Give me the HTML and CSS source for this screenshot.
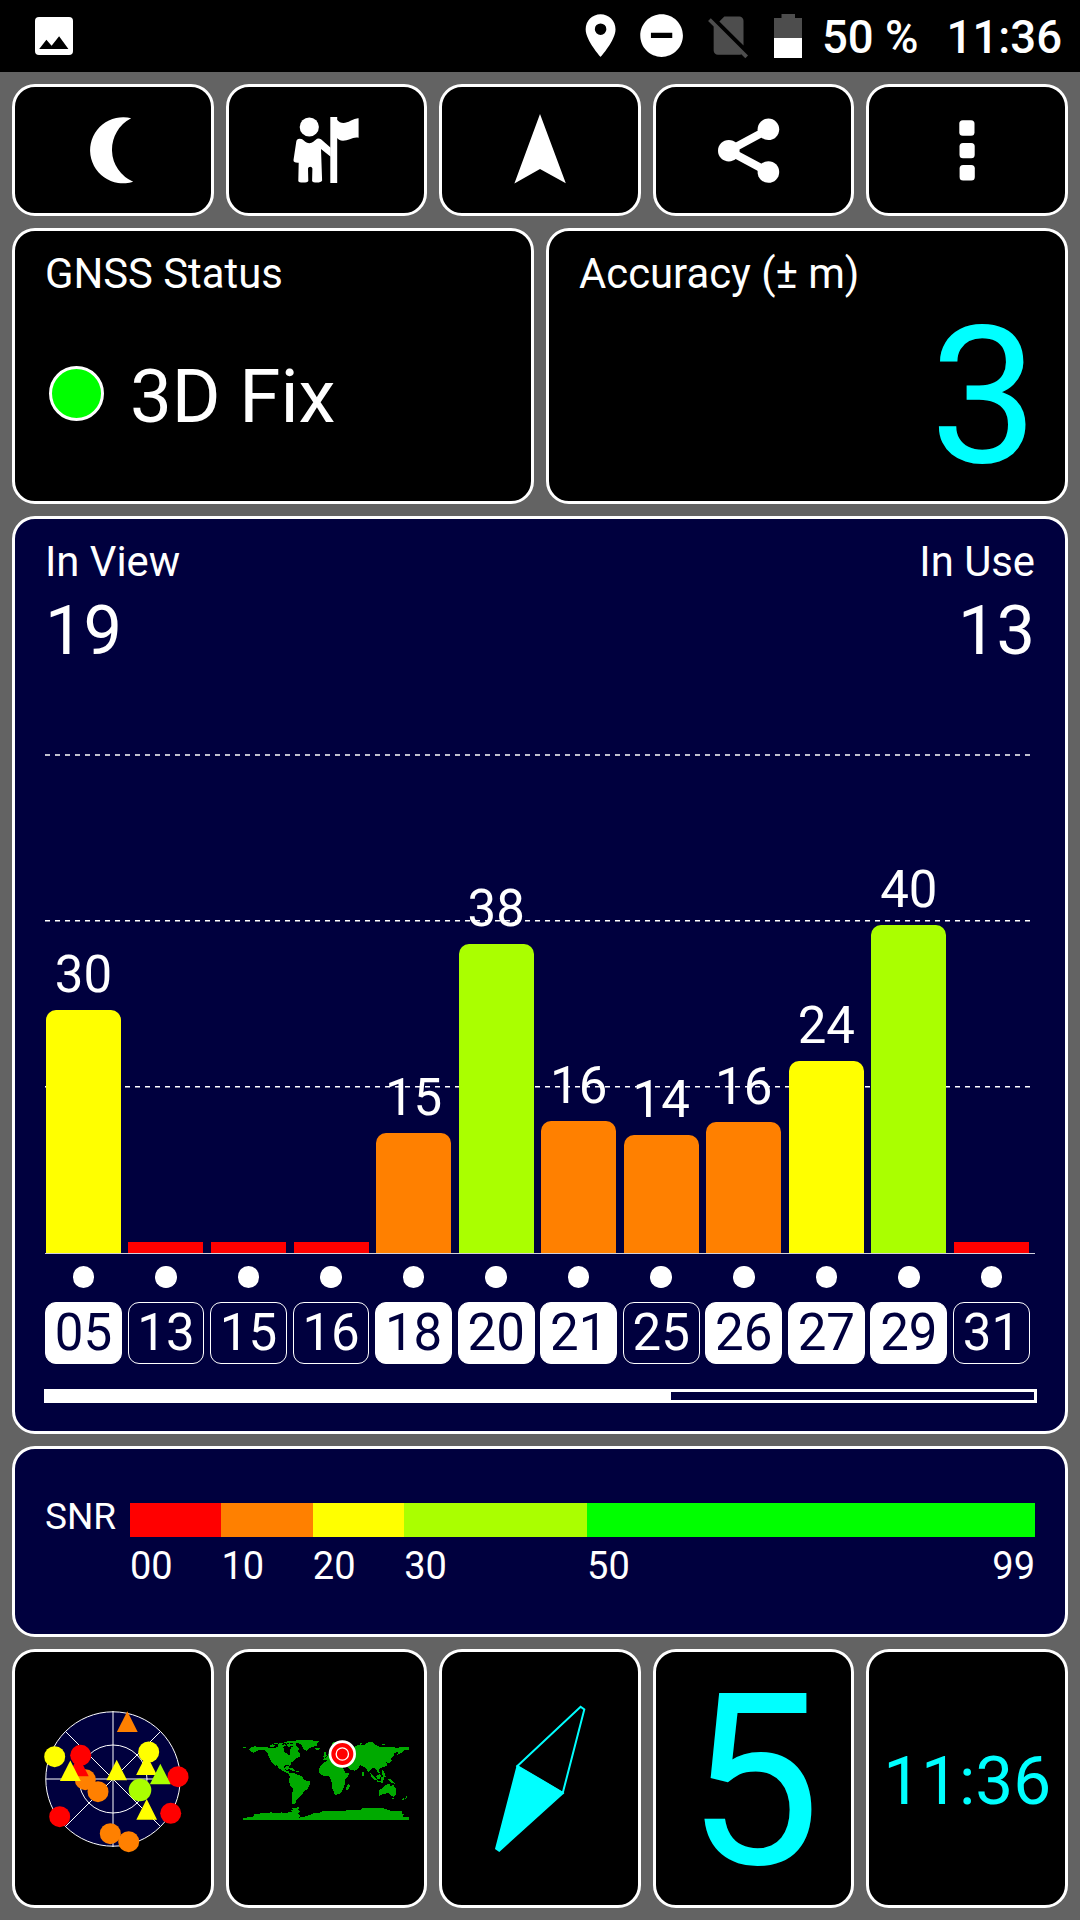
FILE: index.html
```html
<!DOCTYPE html>
<html lang="en">
<head>
    <meta charset="UTF-8">
    <meta name="viewport" content="width=device-width, initial-scale=1.0">
    <title>GNSS Status</title>
    <link rel="stylesheet" href="styles.css">
</head>
<body>
    <div class="status-bar">
        <svg class="status-image" viewBox="0 0 38 38">
            <rect width="38" height="38" rx="4" fill="#fff"/>
            <path d="M4.2 32L11.4 22.7 16.6 28.7 24.1 19.3 33.4 32z" fill="#000"/>
        </svg>
        <svg class="status-icon location" viewBox="0 0 24 24">
            <path fill="#fff" fill-rule="evenodd" d="M12 2C8.13 2 5 5.13 5 9c0 5.25 7 13 7 13s7-7.75 7-13c0-3.87-3.13-7-7-7zm0 9.7a2.7 2.7 0 1 1 0-5.4 2.7 2.7 0 0 1 0 5.4z"/>
        </svg>
        <svg class="status-icon dnd" viewBox="0 0 24 24">
            <path fill="#fff" d="M12 2C6.48 2 2 6.48 2 12s4.48 10 10 10 10-4.48 10-10S17.52 2 12 2zm5 11.1H7v-2.4h10v2.4z"/>
        </svg>
        <svg class="status-icon no-sim" viewBox="0 0 24 24">
            <path fill="#4d4d4d" d="M18.99 5c0-1.1-.89-2-1.99-2h-7L7.66 5.34 19 16.68 18.99 5zM3.65 3.88L2.38 5.15 5 7.77V19c0 1.1.9 2 2.01 2H17c.35 0 .67-.1.96-.26l1.88 1.88 1.27-1.27L3.65 3.88z"/>
        </svg>
        <svg class="battery" viewBox="0 0 28 44">
            <path fill="#4d4d4d" d="M7.5 0h13.5v4H28v20H0V4h7.5z"/>
            <rect y="24" width="28" height="20" fill="#fff"/>
        </svg>
        <span class="status-text percent">50 %</span>
        <span class="status-text">11:36</span>
    </div>

    <div class="screen">
        <div class="row five">
            <div class="tile">
                <svg class="tool-icon" viewBox="-42 -42 84 84">
                    <path d="M18.2-31.7A33 33 0 1 0 20.2 31.7A35 35 0 0 1 18.2-31.7z"/>
                </svg>
            </div>
            <div class="tile">
                <svg class="tool-icon" viewBox="-42.5 -42 84 84">
                    <circle cx="-17.2" cy="-23" r="9.6"/>
                    <path d="M3.8-33h6.9V33H3.8z"/>
                    <path d="M10.2-30.5C14-25.8 19-26.5 24-29.2Q29-32 32.1-31.7V-12.3C27-13.8 22-9.3 16.5-9.2Q12-9.5 10.2-12.5z"/>
                    <path d="M-30.2-8.5Q-29.5-12.3-25-11C-22-9.5-20.5-6.8-17.2-6.8S-12.3-9-9.5-11.2Q-7.5-12-5.5-10.7L4.2-2.3V6.7L-5.5-1-4.4 30.5Q-5.5 32.5-9.6 32.5T-14.4 31L-14.1 18.5Q-14.4 16.7-16.3 16.7T-18.5 18.5L-18.2 31Q-19 32.5-23.4 32.5T-28.2 31L-27.8 12.7Q-33.3 13-33 10z"/>
                </svg>
            </div>
            <div class="tile">
                <svg class="tool-icon" viewBox="-42 -42 84 84">
                    <path d="M0-36L25.8 33.2 0 19-25.6 33.5z"/>
                </svg>
            </div>
            <div class="tile">
                <svg class="tool-icon" viewBox="-42 -42 84 84">
                    <path d="M14.4-20.7L-25.2.7 14.4 22" fill="none" stroke="#fff" stroke-width="8"/>
                    <circle cx="14.4" cy="-20.7" r="10.8"/>
                    <circle cx="-25.2" cy=".7" r="10.8"/>
                    <circle cx="14.4" cy="22" r="10.8"/>
                </svg>
            </div>
            <div class="tile">
                <svg class="tool-icon" viewBox="-42 -42 84 84">
                    <rect x="-7.7" y="-29.7" width="15.2" height="15.4" rx="3.5"/>
                    <rect x="-7.5" y="-7" width="15.2" height="15.2" rx="3.5"/>
                    <rect x="-7.4" y="15" width="15.2" height="15.4" rx="3.5"/>
                </svg>
            </div>
        </div>

        <div class="row two">
            <div class="tile panel">
                <div class="heading">GNSS Status</div>
                <div class="fix">
                    <span class="fix-light"></span>
                    <span class="fix-text">3D Fix</span>
                </div>
            </div>
            <div class="tile panel">
                <div class="heading">Accuracy (± m)</div>
                <div class="accuracy">3</div>
            </div>
        </div>

        <div class="tile panel blue">
            <div class="counts">
                <div>
                    <div class="heading">In View</div>
                    <div class="count">19</div>
                </div>
                <div class="right">
                    <div class="heading">In Use</div>
                    <div class="count">13</div>
                </div>
            </div>

            <div class="plot">
                <svg class="grid-lines" viewBox="0 0 990 583">
                    <path d="M0 85H990M0 250.8H990M0 416.8H990"/>
                </svg>
                <div class="bars">
                    <div class="bar-col"><span>30</span><div class="bar yellow" style="height: 243px"></div></div>
                    <div class="bar-col"><div class="bar red" style="height: 11px"></div></div>
                    <div class="bar-col"><div class="bar red" style="height: 11px"></div></div>
                    <div class="bar-col"><div class="bar red" style="height: 11px"></div></div>
                    <div class="bar-col"><span>15</span><div class="bar orange" style="height: 120px"></div></div>
                    <div class="bar-col"><span>38</span><div class="bar lime" style="height: 309px"></div></div>
                    <div class="bar-col"><span>16</span><div class="bar orange" style="height: 132px"></div></div>
                    <div class="bar-col"><span>14</span><div class="bar orange" style="height: 118px"></div></div>
                    <div class="bar-col"><span>16</span><div class="bar orange" style="height: 131px"></div></div>
                    <div class="bar-col"><span>24</span><div class="bar yellow" style="height: 192px"></div></div>
                    <div class="bar-col"><span>40</span><div class="bar lime" style="height: 328px"></div></div>
                    <div class="bar-col"><div class="bar red" style="height: 11px"></div></div>
                </div>
            </div>

            <div class="satellites">
                <div class="sat used">05</div>
                <div class="sat">13</div>
                <div class="sat">15</div>
                <div class="sat">16</div>
                <div class="sat used">18</div>
                <div class="sat used">20</div>
                <div class="sat used">21</div>
                <div class="sat">25</div>
                <div class="sat used">26</div>
                <div class="sat used">27</div>
                <div class="sat used">29</div>
                <div class="sat">31</div>
            </div>

            <div class="scroll"><div class="scroll-fill"></div></div>
        </div>

        <div class="tile panel blue snr">
            <div class="snr-label">SNR</div>
            <div class="snr-scale">
                <div class="part ten"><div class="swatch red"></div><span>00</span></div>
                <div class="part ten"><div class="swatch orange"></div><span>10</span></div>
                <div class="part ten"><div class="swatch yellow"></div><span>20</span></div>
                <div class="part twenty"><div class="swatch lime"></div><span>30</span></div>
                <div class="part rest"><div class="swatch green"></div><div class="ends"><span>50</span><span>99</span></div></div>
            </div>
        </div>

        <div class="row five">
            <div class="tile">
                <svg class="radar" viewBox="-80 -80 160 160">
                    <g fill="none" stroke="#fff">
                        <circle r="67.2" fill="#00003e"/>
                        <circle r="34"/>
                        <path d="M0-68V68M-67 0H67M-47.5-47.5L47.5 47.5M-47.5 47.5L47.5-47.5"/>
                    </g>
                    <g fill="#ff8000">
                        <circle cx="-27.7" cy=".7" r="10.5"/>
                        <circle cx="-15" cy="12.7" r="10.5"/>
                        <circle cx="-2.7" cy="54.7" r="10.5"/>
                        <circle cx="15.7" cy="62.7" r="10.5"/>
                        <path d="M14.3-67.7l10.4 20.6H3.9z"/>
                    </g>
                    <g fill="#f00">
                        <path d="M-34.7-23.3l10.4 20.6h-20.8z"/>
                        <circle cx="-32.3" cy="-23.7" r="10.5"/>
                        <circle cx="65" cy="-2.3" r="10.5"/>
                        <circle cx="-53.3" cy="37.7" r="10.5"/>
                        <circle cx="57.7" cy="34.3" r="10.5"/>
                    </g>
                    <g fill="#ff0">
                        <path d="M33.5-24.6l10.4 20.6H23.1z"/>
                        <path d="M3.7-19.3l10.4 20.6H-6.7z"/>
                        <path d="M-42.7-18.6l10.4 20.6h-20.8z"/>
                        <path d="M33.7 20.1l10.4 20.6H23.3z"/>
                        <circle cx="-58.3" cy="-22.3" r="10.5"/>
                        <circle cx="35.7" cy="-27" r="10.5"/>
                    </g>
                    <g fill="#aaff00">
                        <path d="M47.3-15.3l10.4 20.6H36.9z"/>
                        <circle cx="27" cy="11" r="11.3"/>
                    </g>
                </svg>
            </div>
            <div class="tile">
                <svg class="world" viewBox="70 293 498 246">
                    <g fill="#00aa00" shape-rendering="crispEdges">
                        <path d="M70 321h8v3h-8zM92 322l13-4 20 2 25 2 38-1 6 6-3 8 9 3 8 8 5-4-3-9 4-11 8-3 8 2 4 11 8 9-2 9-10 4-7 7-10 6 2 8-6 1-6-3-8 3-3 8 6 6 8 2 4 9-7-2-11-6-12-7-9-11-4 1-12-11-9-18-2-9-9-8-20 0-13 7-7-2-7-7z"/>
                        <path d="M150 316l9-4 8 3-7 5-10-1zM163 309l8-2 4 3-9 2zM174 313l7-7 8 3-4 5 12-2 3 5-11 3-13-1zM192 306l14-4 14 0-7 5-12 3zM202 312l9-3 5 8-11 3zM216 310l13-2-1 6 10 10-2 8-10-4-5-9-8-3z"/>
                        <path d="M211 302l25-2 34-1 29 4-7 5 0 7-16 6-8 3-6 8-9-3-7-14-9-7-22-1zM287 324l11-1 3 3-8 3-5-2z"/>
                        <path d="M193 386l8-10h8l-2 6 10 1 5 5-11 0-3-3-6 4zM218 390h9v3h-9zM229 392h8v3h-8z"/>
                        <path d="M207 399l18 0 11 5 11 4 7 11 19 5-3 10-6 13-11 5-6 12-10 9-7 8-3 10h-10l-1-20 4-25-9-12-4-13 4-11z"/>
                        <path d="M303 375l12-11 20-2 14 9 16 1 12 25 14 3-14 17-2 17-6 16-11 12-12 1-8-17-2-21-7-17-17-1-12-8-3-12zM387 430l4 5-6 15-6-1 2-12z"/>
                        <path d="M307 350l7-4-3-8 6-5 5 14-7 5zM308 357l14-8 8-14 9-29 21-3 25 12 20 4 10-6 17 2 10-8 16 0 18 11 12 2 26-1 15 3 38-2v8l-14 2-8 8-12 5 4-9-14 4-1 10-10 8-12 8 2 11-9 5-12 3-4 6 5 11-8-4-5-9-9-5-14 13-9-13-12-6-5-1-2 8-12 8-16-4-6-8-22-9-24-8-12 3-5-5z"/>
                        <path d="M418 312l7-5 5 1-6 5zM443 307l8-3 10 1-2 4-15 1zM488 312l7-1 3 3-10 1zM512 345l5-3-2 17-5-2zM505 360h13l-7 7h-10zM489 364h7v5h-7zM486 391l5-2 3 9 4 11-6 2-5-8zM451 397l8 6 12 15-5 1-10-9zM470 408l9-7 6 3-5 12-7 1zM484 412l6-2 4 4-5 9-5-3zM471 420l12 2 12 3-8 2-16-3zM503 415l10 2 9 8 5 6-7-2-8-3zM428 396h4v10h-4z"/>
                        <path d="M477 450l13-8 7-9 13-1 4 6 6-6 10 16v12l-8 10-11-6-4-5-13 1-15 6zM518 473h6v4h-6zM559 467l5-1-2 8-5 1zM548 476l7-3-2 5-7 2z"/>
                        <path d="M70 540v-8l26-1 8-5-4-6 45-1 10-4 3 4 24-1 4-3 4 3 29-3-5-5 5-2-2-4 23-4-6 9 8 4-7 8 9 6-6 5 24-5 20-8 22-3 6-4h64l12-4 36 2 3-5 10-2 55 1 23 7 39 3-6 4 8 5-6 5 22 4v8z"/>
                    </g>
                    <circle cx="368" cy="341" r="37" fill="#f00" stroke="#fff" stroke-width="8"/>
                    <circle cx="368" cy="341" r="18.5" fill="#f00" stroke="#fff" stroke-width="4"/>
                </svg>
            </div>
            <div class="tile">
                <svg class="compass" viewBox="-80 -80 160 160">
                    <g stroke="#0ff" stroke-width="2">
                        <path d="M-22.6-13L40.6-72.2 44.3-69.6 22.8 13.8z" fill="none"/>
                        <path d="M-22.6-12.5L22.8 14.2-40.8 71.7-43.9 69.6z" fill="#0ff"/>
                    </g>
                </svg>
            </div>
            <div class="tile"><span class="speed">5</span></div>
            <div class="tile"><span class="clock">11:36</span></div>
        </div>
    </div>
</body>
</html>
```
FILE: styles.css
```css
/* General */
* {
    box-sizing: border-box;
}

body {
    margin: 0;
    width: 1080px;
    height: 1920px;
    overflow: hidden;
    font-family: Roboto, "Liberation Sans", sans-serif;
    background-color: #636363;
    color: #FFFFFF;
}

svg {
    display: block;
    flex-shrink: 0;
}

/* Android status bar */
.status-bar {
    display: flex;
    align-items: center;
    height: 72px;
    padding: 0 18px 0 35px;
    background-color: #000000;
}

.status-image {
    width: 38px;
    height: 38px;
    margin-right: auto;
}

.status-icon {
    width: 51.2px;
    height: 51.2px;
}

.dnd {
    margin-left: 10.6px;
}

.no-sim {
    margin-left: 15.2px;
}

.battery {
    width: 28px;
    height: 44px;
    margin: 0 20px;
}

.status-text {
    font-size: 45.5px;
    font-weight: 500;
    line-height: 72px;
    padding-top: 4px;
}

.percent {
    margin-right: 28px;
}

/* Tiles */
.screen {
    display: grid;
    grid-template-rows: 132px 275.6px 918.2px 191.4px 258.8px;
    gap: 12px;
    padding: 12px;
}

.row {
    display: grid;
    gap: 12px;
}

.five {
    grid-template-columns: repeat(5, 1fr);
}

.two {
    grid-template-columns: repeat(2, 1fr);
}

.tile {
    display: flex;
    align-items: center;
    justify-content: center;
    min-width: 0;
    min-height: 0;
    background-color: #000000;
    border: 3px solid #FFFFFF;
    border-radius: 23px;
}

.panel {
    display: block;
    padding: 19px 30px 0;
}

.blue {
    background-color: #00003E;
}

.tool-icon {
    width: 84px;
    height: 84px;
    fill: #FFFFFF;
}

.heading {
    font-size: 41.8px;
    line-height: 48px;
}

/* Fix and accuracy */
.fix {
    display: flex;
    align-items: center;
    gap: 26.5px;
    margin-top: 55px;
    padding-left: 3.5px;
}

.fix-light {
    width: 55px;
    height: 55px;
    margin-bottom: 8px;
    border: 3px solid #FFFFFF;
    border-radius: 50%;
    background-color: #00FF00;
}

.fix-text {
    font-size: 74.5px;
    line-height: 88px;
}

.accuracy {
    margin: 3px -3px 0 0;
    font-size: 192px;
    line-height: 192px;
    text-align: right;
    color: #00FFFF;
}

/* Satellite bars */
.counts {
    display: flex;
    justify-content: space-between;
}

.right {
    text-align: right;
}

.count {
    margin: 5px 0 -1px;
    font-size: 68.5px;
    line-height: 80px;
}

.plot {
    position: relative;
    height: 584px;
    border-bottom: 1px solid #D0D0DC;
}

.grid-lines {
    position: absolute;
    top: 0;
    left: 0;
    width: 990px;
    height: 583px;
    stroke: #FFFFFF;
    stroke-width: 1.4;
    stroke-dasharray: 5 5;
}

.bars,
.satellites {
    display: grid;
    grid-template-columns: repeat(12, 76.8px);
    column-gap: 5.75px;
}

.bars {
    position: relative;
    height: 100%;
}

.bar-col {
    display: flex;
    flex-direction: column;
    align-items: center;
    justify-content: flex-end;
    font-size: 51px;
    line-height: 56px;
}

.bar-col span {
    margin-bottom: 7px;
}

.bar {
    width: 75px;
    border-radius: 10px 10px 0 0;
}

.bar.red {
    border-radius: 0;
}

.sat {
    height: 61.5px;
    margin-top: 48.5px;
    border: 1.6px solid #FFFFFF;
    border-radius: 11px;
    font-size: 51px;
    line-height: 58px;
    text-align: center;
}

/* Dot above each satellite number */
.sat::before {
    content: "";
    display: block;
    width: 21.5px;
    height: 21.5px;
    margin: -37px auto 16.5px;
    border-radius: 50%;
    background-color: #FFFFFF;
}

.used {
    background-color: #FFFFFF;
    color: #00003E;
}

.scroll {
    height: 14px;
    margin: 25.5px -2px 0 -1px;
    border: 3px solid #FFFFFF;
}

.scroll-fill {
    width: 63.2%;
    height: 100%;
    background-color: #FFFFFF;
}

/* SNR legend */
.snr {
    display: grid;
    grid-template-columns: 85px 1fr;
    align-items: start;
    padding-top: 54px;
}

.snr-label {
    font-size: 37px;
    line-height: 28px;
}

.snr-scale {
    display: flex;
    font-size: 38px;
    line-height: 44px;
}

.part {
    min-width: 0;
}

.ten {
    flex: 10 1 0;
}

.twenty {
    flex: 20 1 0;
}

.rest {
    flex: 49 1 0;
}

.swatch {
    height: 34px;
    margin-bottom: 7px;
}

.ends {
    display: flex;
    justify-content: space-between;
}

.red {
    background-color: #FF0000;
}

.orange {
    background-color: #FF8000;
}

.yellow {
    background-color: #FFFF00;
}

.lime {
    background-color: #AAFF00;
}

.green {
    background-color: #00FF00;
}

/* Bottom tiles */
.radar,
.compass {
    width: 160px;
    height: 160px;
}

.world {
    width: 166px;
    height: 82px;
}

.speed {
    padding-top: 6px;
    font-size: 239px;
    line-height: 240px;
    color: #00FFFF;
}

.clock {
    padding-top: 4px;
    font-size: 67.5px;
    line-height: 80px;
    color: #00FFFF;
}
```
